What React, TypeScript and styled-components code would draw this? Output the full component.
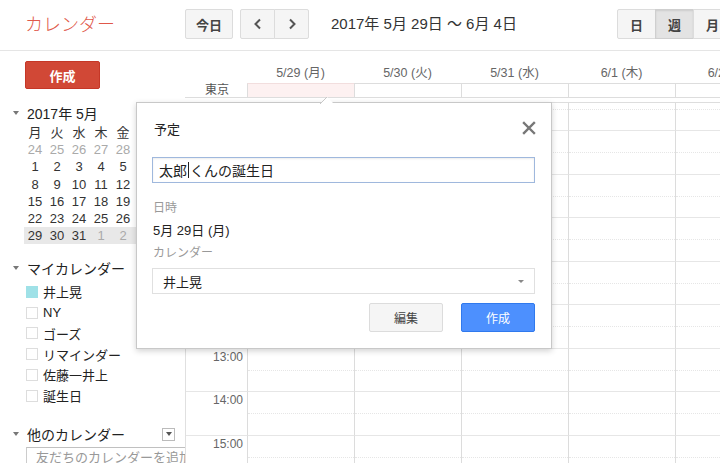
import React from "react";
import styled, { createGlobalStyle } from "styled-components";

const FONT = `"Liberation Sans", "Noto Sans CJK JP", Arial, sans-serif`;

const GlobalStyle = createGlobalStyle`
  html, body { margin: 0; padding: 0; background: #fff; }
  body { font-family: ${FONT}; color: #222; overflow: hidden; }
  * { box-sizing: border-box; }
`;

const Page = styled.div`
  position: relative;
  width: 720px;
  height: 463px;
  overflow: hidden;
  display: flex;
  flex-direction: column;
`;

/* ---------- top header ---------- */
const Header = styled.header`
  height: 51px;
  flex: none;
  display: flex;
  align-items: flex-start;
  padding: 9px 0 0 25px;
  border-bottom: 1px solid #e5e5e5;
  white-space: nowrap;
`;

const Logo = styled.div`
  width: 160px;
  flex: none;
  padding-top: 2px;
  font-size: 18px;
  font-weight: 300;
  line-height: 28px;
  color: #e0584a;
`;

const GrayButton = styled.button<{ $w: number; $active?: boolean }>`
  width: ${(p) => p.$w}px;
  height: 30px;
  flex: none;
  display: flex;
  align-items: center;
  justify-content: center;
  padding: 0;
  font-family: ${FONT};
  font-size: 13px;
  font-weight: bold;
  color: #444;
  background: ${(p) => (p.$active ? "#e3e3e3" : "#f5f5f5")};
  border: 1px solid ${(p) => (p.$active ? "#cfcfcf" : "#dcdcdc")};
  border-radius: 2px;
  box-shadow: ${(p) => (p.$active ? "inset 0 1px 2px rgba(0,0,0,0.1)" : "none")};
`;

const Group = styled.div<{ $ml: number }>`
  display: flex;
  flex: none;
  margin-left: ${(p) => p.$ml}px;
  & > button + button { margin-left: -1px; }
  & > button:not(:first-child) { border-top-left-radius: 0; border-bottom-left-radius: 0; }
  & > button:not(:last-child) { border-top-right-radius: 0; border-bottom-right-radius: 0; }
`;

const DateRange = styled.div`
  width: 286px;
  flex: none;
  margin-left: 22px;
  padding-top: 1px;
  font-size: 15px;
  line-height: 28px;
  color: #333;
`;

/* ---------- body ---------- */
const Body = styled.div`
  flex: 1;
  display: flex;
  min-height: 0;
`;

const Sidebar = styled.aside`
  width: 185px;
  flex: none;
  overflow: hidden;
  display: flex;
  flex-direction: column;
  padding-top: 10px;
  & > * { flex: none; }
`;

const CreateButton = styled.button`
  margin-left: 25px;
  width: 75px;
  height: 28px;
  padding: 0;
  background: #d14836;
  border: 1px solid #c53727;
  border-radius: 2px;
  color: #fff;
  font-family: ${FONT};
  font-size: 13px;
  font-weight: bold;
`;

const Caret = styled.span`
  display: inline-block;
  width: 0;
  height: 0;
  border-left: 3.5px solid transparent;
  border-right: 3.5px solid transparent;
  border-top: 4px solid #777;
  margin: 0 8px 0 0;
  vertical-align: middle;
`;

const SectionTitle = styled.div<{ $mt: number }>`
  margin-top: ${(p) => p.$mt}px;
  padding-left: 13px;
  height: 18px;
  display: flex;
  align-items: center;
  font-size: 14px;
  color: #222;
  white-space: nowrap;
`;

const MiniCal = styled.div`
  margin-top: 2px;
  margin-left: 24px;
  display: grid;
  grid-template-columns: repeat(7, 22px);
  grid-auto-rows: 17.2px;
  width: 190px;
`;

const MiniCell = styled.div<{ $muted?: boolean; $hl?: boolean }>`
  font-size: 13px;
  line-height: 17px;
  text-align: center;
  color: ${(p) => (p.$muted ? "#aaa" : "#333")};
  background: ${(p) => (p.$hl ? "#e8e8e8" : "transparent")};
`;

const CalList = styled.div`
  margin-top: 4px;
  display: flex;
  flex-direction: column;
`;

const CalItem = styled.div`
  height: 20.8px;
  display: flex;
  align-items: center;
  padding-left: 26px;
  font-size: 13px;
  color: #222;
  white-space: nowrap;
`;

const Check = styled.span<{ $color?: string }>`
  width: 12px;
  height: 12px;
  margin-right: 5px;
  flex: none;
  background: ${(p) => p.$color ?? "#fff"};
  border: 1px solid ${(p) => (p.$color ? p.$color : "#ddd")};
`;

const OtherRow = styled.div`
  margin-top: 19px;
  display: flex;
  align-items: center;
  justify-content: space-between;
  padding-right: 10px;
`;

const MiniDrop = styled.span`
  width: 13px;
  height: 13px;
  border: 1px solid #bbb;
  display: flex;
  align-items: center;
  justify-content: center;
  &::after {
    content: "";
    border-left: 3px solid transparent;
    border-right: 3px solid transparent;
    border-top: 4px solid #555;
  }
`;

const AddInput = styled.div`
  margin-top: 4px;
  margin-left: 26px;
  width: 175px;
  height: 22px;
  border: 1px solid #ccc;
  border-top-color: #c0c0c0;
  padding: 2px 0 0 9px;
  font-size: 13px;
  line-height: 16px;
  color: #999;
  white-space: nowrap;
`;

/* ---------- main week view ---------- */
const Main = styled.main`
  flex: 1;
  min-width: 0;
  overflow: hidden;
  display: flex;
  flex-direction: column;
`;

const COLS = "62px 107px 107px 107px 107px 107px";

const DayHeadRow = styled.div`
  height: 32px;
  flex: none;
  display: grid;
  grid-template-columns: ${COLS};
`;

const DayHead = styled.div`
  padding-top: 14px;
  text-align: center;
  font-size: 12.5px;
  line-height: 16px;
  color: #666;
  white-space: nowrap;
`;

const AllDayRow = styled.div`
  height: 15px;
  flex: none;
  display: grid;
  grid-template-columns: ${COLS};
  border-bottom: 1px solid #ddd;
`;

const ZoneLabel = styled.div`
  font-size: 12px;
  line-height: 12px;
  color: #555;
  padding-left: 20px;
  margin-top: 1px;
`;

const AllDayCell = styled.div<{ $today?: boolean }>`
  border-top: 1px solid ${(p) => (p.$today ? "#f2dede" : "#ddd")};
  border-left: 1px solid #ddd;
  background: ${(p) => (p.$today ? "#fdf1f1" : "#fff")};
`;

const GridBody = styled.div`
  margin-top: 4px;
  flex: 1;
  overflow: hidden;
  border-top: 1px solid #ddd;
  border-left: 1px solid #e0e0e0;
`;

const GridInner = styled.div`
  margin-top: -16.5px;
  margin-left: -1px;
`;

const HourRow = styled.div`
  height: 43.5px;
  display: grid;
  grid-template-columns: ${COLS};
`;

const TimeLabel = styled.div`
  border-top: 1px solid #e6e6e6;
  text-align: right;
  padding: 1px 4px 0 0;
  font-size: 12px;
  line-height: 14px;
  color: #666;
`;

const HourCell = styled.div`
  position: relative;
  border-top: 1px solid #e6e6e6;
  border-left: 1px solid #dcdcdc;
  &::after {
    content: "";
    position: absolute;
    left: 0;
    right: 0;
    top: 21px;
    border-top: 1px dotted #e6e6e6;
  }
`;

/* ---------- quick-add dialog ---------- */
const Dialog = styled.div`
  position: absolute;
  left: 136px;
  top: 102px;
  width: 416px;
  height: 247px;
  background: #fff;
  border: 1px solid #c8c8c8;
  box-shadow: 0 2px 6px rgba(0, 0, 0, 0.18);
  padding: 15px 16px 0 15px;
  display: flex;
  flex-direction: column;
  & > * { flex: none; }
`;

const Tail = styled.svg`
  position: absolute;
  left: 183px;
  top: -7px;
  overflow: visible;
`;

const TitleRow = styled.div`
  height: 20px;
  display: flex;
  align-items: center;
  justify-content: space-between;
`;

const Title = styled.div`
  padding-left: 2px;
  font-size: 13px;
  color: #222;
`;

const CloseIcon = styled.svg`
  display: block;
  margin-right: -1px;
`;

const TextBox = styled.div`
  margin-top: 19px;
  height: 26px;
  border: 1px solid #9fb8dd;
  box-shadow: inset 0 1px 2px rgba(0, 0, 0, 0.08);
  padding: 0 0 0 6px;
  display: flex;
  align-items: center;
  font-size: 14px;
  color: #222;
  white-space: nowrap;
`;

const TextCaret = styled.span`
  display: inline-block;
  width: 1px;
  height: 16px;
  background: #222;
  margin: 0 1px;
`;

const FieldLabel = styled.div<{ $mt: number }>`
  margin-top: ${(p) => p.$mt}px;
  padding-left: 1px;
  font-size: 12px;
  line-height: 16px;
  color: #999;
`;

const FieldValue = styled.div`
  margin-top: 6px;
  padding-left: 1px;
  font-size: 13px;
  line-height: 18px;
  color: #222;
`;

const SelectBox = styled.div`
  margin-top: 7px;
  height: 26px;
  border: 1px solid #e0e0e0;
  padding: 0 10px 0 10px;
  display: flex;
  align-items: center;
  justify-content: space-between;
  font-size: 13px;
  color: #222;
  &::after {
    content: "";
    border-left: 3px solid transparent;
    border-right: 3px solid transparent;
    border-top: 3.5px solid #888;
  }
`;

const Actions = styled.div`
  margin-top: 9px;
  display: flex;
  justify-content: flex-end;
  gap: 18px;
`;

const ActionButton = styled.button<{ $primary?: boolean }>`
  width: 74px;
  height: 29px;
  padding: 0;
  border-radius: 2px;
  font-family: ${FONT};
  font-size: 12px;
  border: 1px solid ${(p) => (p.$primary ? "#3079ed" : "#dcdcdc")};
  background: ${(p) => (p.$primary ? "#4d90fe" : "#f5f5f5")};
  color: ${(p) => (p.$primary ? "#fff" : "#444")};
`;

const weekdays = ["月", "火", "水", "木", "金", "土", "日"];
const weeks: { d: number; muted: boolean }[][] = [
  [24, 25, 26, 27, 28, 29, 30].map((d) => ({ d, muted: true })),
  [1, 2, 3, 4, 5, 6, 7].map((d) => ({ d, muted: false })),
  [8, 9, 10, 11, 12, 13, 14].map((d) => ({ d, muted: false })),
  [15, 16, 17, 18, 19, 20, 21].map((d) => ({ d, muted: false })),
  [22, 23, 24, 25, 26, 27, 28].map((d) => ({ d, muted: false })),
  [
    { d: 29, muted: false },
    { d: 30, muted: false },
    { d: 31, muted: false },
    { d: 1, muted: true },
    { d: 2, muted: true },
    { d: 3, muted: true },
    { d: 4, muted: true },
  ],
];

const myCalendars = [
  { name: "井上晃", color: "#9fe1e7" },
  { name: "NY" },
  { name: "ゴーズ" },
  { name: "リマインダー" },
  { name: "佐藤一井上" },
  { name: "誕生日" },
];

const days = ["5/29 (月)", "5/30 (火)", "5/31 (水)", "6/1 (木)", "6/2 (金)"];
const hours = [7, 8, 9, 10, 11, 12, 13, 14, 15, 16];

const Chevron = ({ dir }: { dir: "l" | "r" }) => (
  <svg width="10" height="12" viewBox="0 0 10 12">
    <polyline
      points={dir === "l" ? "7,1.5 2.5,6 7,10.5" : "3,1.5 7.5,6 3,10.5"}
      fill="none"
      stroke="#555"
      strokeWidth="2"
    />
  </svg>
);

export default function App() {
  return (
    <>
      <GlobalStyle />
      <Page>
        <Header>
          <Logo>カレンダー</Logo>
          <GrayButton $w={48}>今日</GrayButton>
          <Group $ml={7}>
            <GrayButton $w={35}>
              <Chevron dir="l" />
            </GrayButton>
            <GrayButton $w={35}>
              <Chevron dir="r" />
            </GrayButton>
          </Group>
          <DateRange>2017年 5月 29日 〜 6月 4日</DateRange>
          <Group $ml={0}>
            <GrayButton $w={39}>日</GrayButton>
            <GrayButton $w={39} $active>
              週
            </GrayButton>
            <GrayButton $w={39}>月</GrayButton>
          </Group>
        </Header>
        <Body>
          <Sidebar>
            <CreateButton>作成</CreateButton>
            <SectionTitle $mt={15}>
              <Caret />
              2017年 5月
            </SectionTitle>
            <MiniCal>
              {weekdays.map((w) => (
                <MiniCell key={w}>{w}</MiniCell>
              ))}
              {weeks.map((wk, i) =>
                wk.map((c, j) => (
                  <MiniCell key={`${i}-${j}`} $muted={c.muted} $hl={i === 5}>
                    {c.d}
                  </MiniCell>
                ))
              )}
            </MiniCal>
            <SectionTitle $mt={15}>
              <Caret />
              マイカレンダー
            </SectionTitle>
            <CalList>
              {myCalendars.map((c) => (
                <CalItem key={c.name}>
                  <Check $color={c.color} />
                  {c.name}
                </CalItem>
              ))}
            </CalList>
            <OtherRow>
              <SectionTitle $mt={0}>
                <Caret />
                他のカレンダー
              </SectionTitle>
              <MiniDrop />
            </OtherRow>
            <AddInput>友だちのカレンダーを追加</AddInput>
          </Sidebar>
          <Main>
            <DayHeadRow>
              <div />
              {days.map((d) => (
                <DayHead key={d}>{d}</DayHead>
              ))}
            </DayHeadRow>
            <AllDayRow>
              <ZoneLabel>東京</ZoneLabel>
              {days.map((d, i) => (
                <AllDayCell key={d} $today={i === 0} />
              ))}
            </AllDayRow>
            <GridBody>
              <GridInner>
                {hours.map((h) => (
                  <HourRow key={h}>
                    <TimeLabel>{`${h}:00`}</TimeLabel>
                    {days.map((d) => (
                      <HourCell key={d} />
                    ))}
                  </HourRow>
                ))}
              </GridInner>
            </GridBody>
          </Main>
        </Body>

        <Dialog>
          <Tail width="14" height="8" viewBox="0 0 14 8">
            <polygon points="0,8 7,1 14,8" fill="#fff" />
            <polyline points="0,8 7,1" fill="none" stroke="#c8c8c8" strokeWidth="1" />
          </Tail>
          <TitleRow>
            <Title>予定</Title>
            <CloseIcon width="14" height="14" viewBox="0 0 14 14">
              <path d="M2 2 L12 12 M12 2 L2 12" stroke="#777" strokeWidth="2.4" strokeLinecap="square" />
            </CloseIcon>
          </TitleRow>
          <TextBox>
            太郎
            <TextCaret />
            くんの誕生日
          </TextBox>
          <FieldLabel $mt={17}>日時</FieldLabel>
          <FieldValue>5月 29日 (月)</FieldValue>
          <FieldLabel $mt={5}>カレンダー</FieldLabel>
          <SelectBox>井上晃</SelectBox>
          <Actions>
            <ActionButton>編集</ActionButton>
            <ActionButton $primary>作成</ActionButton>
          </Actions>
        </Dialog>
      </Page>
    </>
  );
}
